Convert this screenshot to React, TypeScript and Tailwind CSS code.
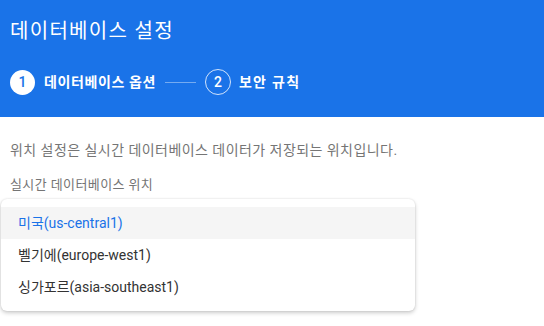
import React from 'react';

const font = { fontFamily: 'Roboto, "Noto Sans CJK KR", sans-serif' };

const locations = [
  { id: 'us-central1', label: '미국(us-central1)' },
  { id: 'europe-west1', label: '벨기에(europe-west1)' },
  { id: 'asia-southeast1', label: '싱가포르(asia-southeast1)' },
];

const App: React.FC = () => {
  const selected = 'us-central1';

  return (
    <div className="w-[544px] h-[326px] bg-white overflow-hidden" style={font}>
      {/* Header */}
      <div className="bg-[#1a73e8] h-[117px] px-[10px] pt-[16px]">
        <h1 className="text-[20px] leading-[30px] tracking-[1.3px] text-white font-normal">데이터베이스 설정</h1>
        <div className="flex items-center mt-[23px]">
          <span className="w-[25px] h-[25px] rounded-full bg-white text-[#1a73e8] text-[14px] font-medium flex items-center justify-center">
            1
          </span>
          <span className="ml-[9px] text-[14px] tracking-[0.6px] font-bold text-white">데이터베이스 옵션</span>
          <span className="ml-[9px] mr-[9px] w-[31px] h-px bg-white/40" />
          <span className="w-[26px] h-[26px] rounded-full border border-white/80 text-white text-[14px] font-medium flex items-center justify-center">
            2
          </span>
          <span className="ml-[8px] text-[14px] tracking-[1.3px] font-bold text-white">보안 규칙</span>
        </div>
      </div>

      {/* Body */}
      <div className="px-[10px] pt-[23px]">
        <p className="text-[14px] leading-[20px] tracking-[0.45px] text-[#757575]">
          위치 설정은 실시간 데이터베이스 데이터가 저장되는 위치입니다.
        </p>
        <p className="mt-[16px] text-[13px] leading-[18px] tracking-[0.4px] text-[#757575]">실시간 데이터베이스 위치</p>
      </div>

      <div className="ml-[1px] mt-[5px] w-[414px] rounded-[6px] bg-white py-[8px] shadow-[0_2px_4px_rgba(0,0,0,0.2),0_0_2px_rgba(0,0,0,0.12)]">
        {locations.map((loc) => (
          <div
            key={loc.id}
            className={`h-[32px] flex items-center px-[17px] text-[14px] ${
              loc.id === selected ? 'bg-[#f5f5f5] text-[#1a73e8]' : 'text-[#333333]'
            }`}
          >
            {loc.label}
          </div>
        ))}
      </div>
    </div>
  );
};

export default App;
